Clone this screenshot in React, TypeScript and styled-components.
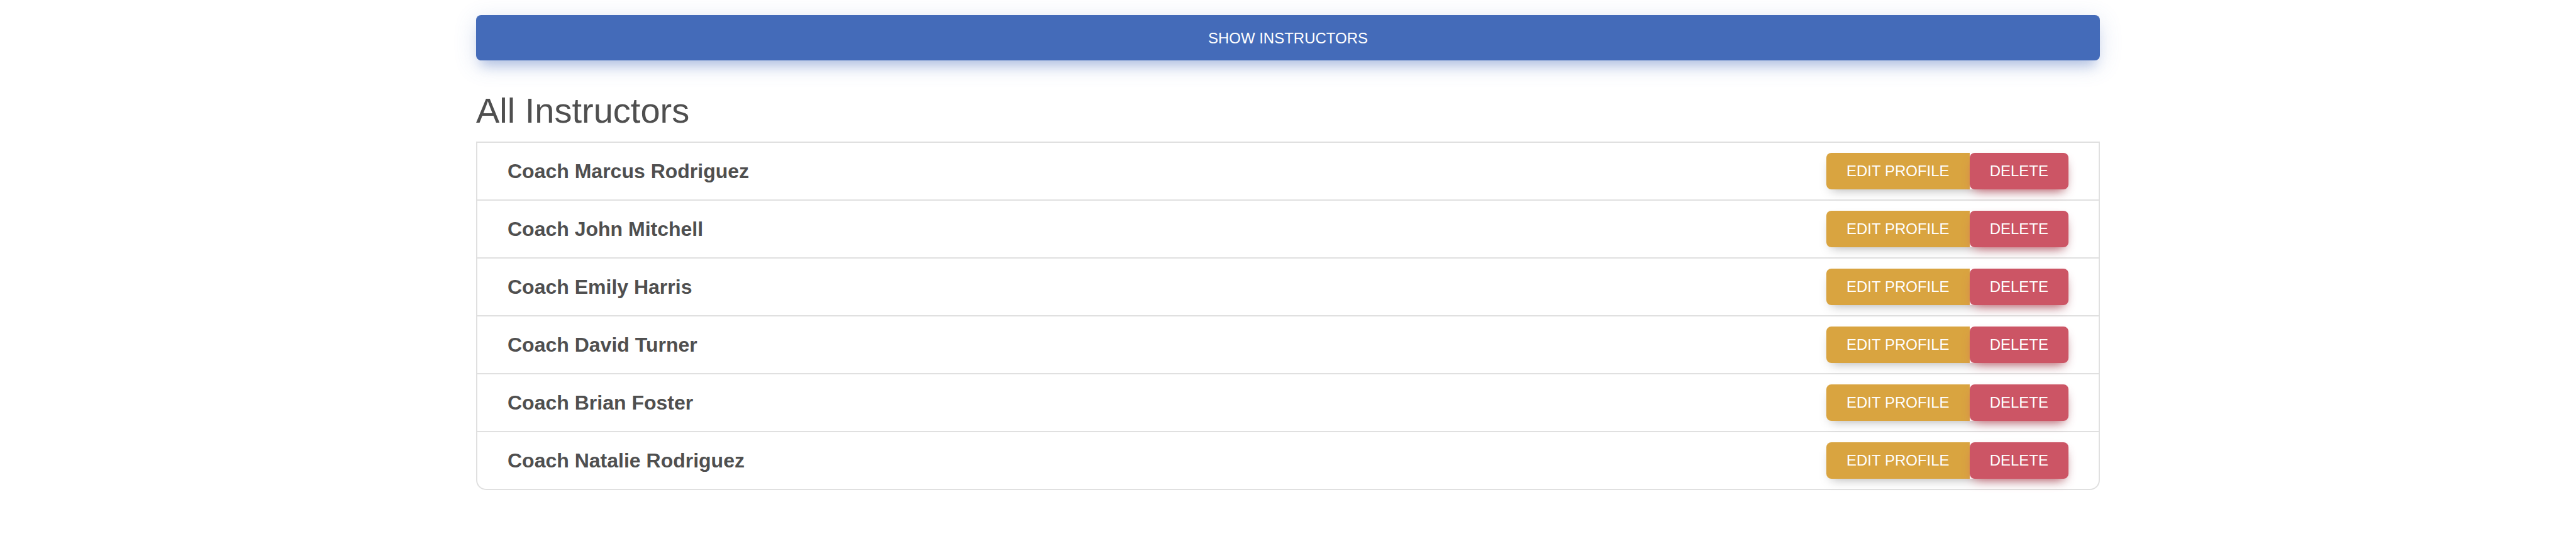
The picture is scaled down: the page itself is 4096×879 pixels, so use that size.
import React, { useState } from "react";
import styled, { createGlobalStyle } from "styled-components";

const GlobalStyle = createGlobalStyle`
  *, *::before, *::after { box-sizing: border-box; }
  body {
    margin: 0;
    background: #fff;
    color: #4f4f4f;
    font-family: "Liberation Sans", Helvetica, Arial, sans-serif;
  }
`;

const Container = styled.main`
  max-width: 2582px;
  margin: 0 auto;
  padding: 24px 0;
`;

const Button = styled.button`
  border: 0;
  border-radius: 8px;
  color: #fff;
  font-family: inherit;
  font-size: 24px;
  line-height: 36px;
  text-transform: uppercase;
  white-space: nowrap;
  cursor: pointer;
`;

const ShowButton = styled(Button)`
  display: block;
  width: 100%;
  padding: 19px 48px 17px;
  background: #446bb9;
  box-shadow: 0 16px 18px -8px rgba(68, 107, 185, 0.3),
    0 8px 36px 0 rgba(68, 107, 185, 0.2);
`;

const Title = styled.h2`
  margin: 46px 0 16px;
  font-size: 56px;
  font-weight: 400;
  line-height: 67px;
`;

const List = styled.ul`
  margin: 0;
  padding: 0;
  list-style: none;
  border: 2px solid #e0e0e0;
  border-radius: 0 0 16px 16px;
`;

const Row = styled.li`
  display: flex;
  align-items: center;
  justify-content: space-between;
  padding: 16px 48px;

  & + & {
    border-top: 2px solid #e0e0e0;
  }
`;

const Name = styled.strong`
  font-size: 32px;
  line-height: 48px;
`;

const ButtonGroup = styled.div`
  display: flex;
  border-radius: 8px;
  box-shadow: 0 8px 18px -8px rgba(0, 0, 0, 0.35);
`;

const ActionButton = styled(Button)<{ $tone: "edit" | "delete" }>`
  padding: 11px 32px;
  background: ${(p) => (p.$tone === "edit" ? "#d9a440" : "#cc5565")};
  border-radius: ${(p) => (p.$tone === "edit" ? "8px 0 0 8px" : "8px")};
  box-shadow: ${(p) =>
    p.$tone === "edit" ? "none" : "0 8px 18px -8px #cc5565"};
`;

const instructors = [
  "Coach Marcus Rodriguez",
  "Coach John Mitchell",
  "Coach Emily Harris",
  "Coach David Turner",
  "Coach Brian Foster",
  "Coach Natalie Rodriguez",
];

export default function App() {
  const [open, setOpen] = useState(true);

  return (
    <>
      <GlobalStyle />
      <Container>
        <ShowButton
          type="button"
          aria-expanded={open}
          onClick={() => setOpen(!open)}
        >
          Show Instructors
        </ShowButton>
        {open && (
          <section>
            <Title>All Instructors</Title>
            <List>
              {instructors.map((name) => (
                <Row key={name}>
                  <Name>{name}</Name>
                  <ButtonGroup role="group" aria-label={name}>
                    <ActionButton type="button" $tone="edit">
                      Edit Profile
                    </ActionButton>
                    <ActionButton type="button" $tone="delete">
                      Delete
                    </ActionButton>
                  </ButtonGroup>
                </Row>
              ))}
            </List>
          </section>
        )}
      </Container>
    </>
  );
}
